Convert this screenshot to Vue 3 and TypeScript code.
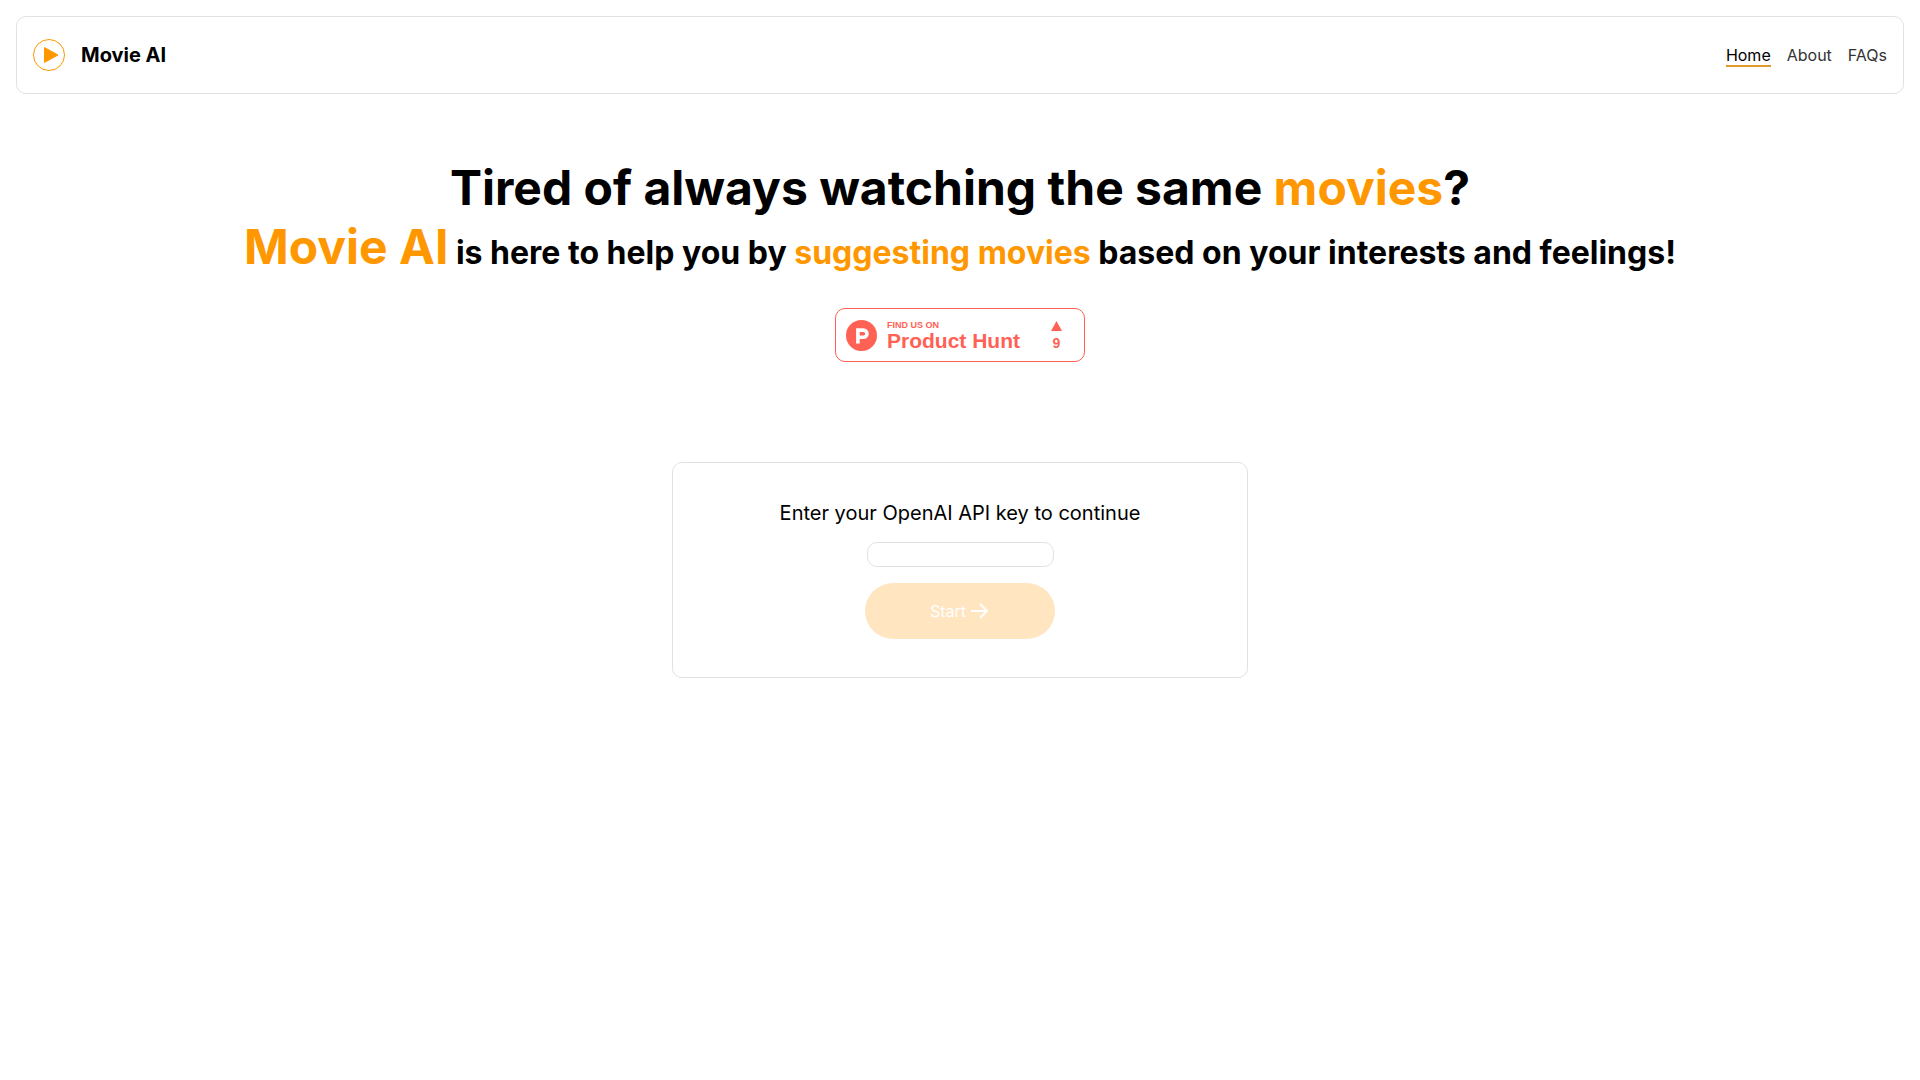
<script setup lang="ts">
import { computed, ref } from 'vue'

interface NavItem {
  label: string
  href: string
  active: boolean
}

const navItems: NavItem[] = [
  { label: 'Home', href: '#home', active: true },
  { label: 'About', href: '#about', active: false },
  { label: 'FAQs', href: '#faqs', active: false },
]

const apiKey = ref('')
const canStart = computed(() => apiKey.value.trim().length > 0)
</script>

<template>
  <div class="page">
    <header class="topbar">
      <a class="brand" href="#home">
        <svg class="brand-logo" viewBox="0 0 32 32" aria-hidden="true">
          <circle cx="16" cy="16" r="15.5" fill="none" stroke="#ff9800" />
          <path
            d="M11.5 8.6v14.8L25 16z"
            fill="#ff9800"
            stroke="#ff9800"
            stroke-width="1"
            stroke-linejoin="round"
          />
        </svg>
        <span>Movie AI</span>
      </a>
      <nav class="nav">
        <a
          v-for="item in navItems"
          :key="item.label"
          :href="item.href"
          class="nav-link"
          :class="{ active: item.active }"
          >{{ item.label }}</a
        >
      </nav>
    </header>

    <main class="content">
      <div class="hero">
        <h1 class="title">Tired of always watching the same <span class="accent">movies</span>?</h1>
        <h2 class="subtitle">
          <span class="accent large">Movie AI</span> is here to help you by
          <span class="accent">suggesting movies</span> based on your interests and feelings!
        </h2>
      </div>

      <a class="hunt" href="#product-hunt">
        <svg class="hunt-logo" viewBox="0 0 31 31" aria-hidden="true">
          <circle cx="15.5" cy="15.5" r="15.5" fill="#ff6154" />
          <path
            d="M11.900 23.600V10.100H17.400a3.500 3.500 0 0 1 0 7.200H11.900"
            fill="none"
            stroke="#fff"
            stroke-width="3.600"
          />
        </svg>
        <span class="hunt-text">
          <span class="hunt-small">FIND US ON</span>
          <span class="hunt-name">Product Hunt</span>
        </span>
        <span class="hunt-votes">
          <svg class="hunt-arrow" viewBox="0 0 11 10" aria-hidden="true">
            <path fill="#ff6154" d="M5.5 0L11 10H0z" />
          </svg>
          <span>9</span>
        </span>
      </a>

      <form class="card" @submit.prevent>
        <label class="card-label" for="api-key">Enter your OpenAI API key to continue</label>
        <input id="api-key" v-model="apiKey" class="key-input" type="password" autocomplete="off" />
        <button class="start" type="submit" :disabled="!canStart">
          <span>Start</span>
          <svg class="start-arrow" viewBox="0 0 20 20" aria-hidden="true">
            <path d="M1 10h15M10 3l7 7-7 7" fill="none" stroke="currentColor" stroke-width="2" />
          </svg>
        </button>
      </form>
    </main>
  </div>
</template>

<style>
body {
  margin: 0;
  background: #fff;
}
</style>

<style scoped>
.page {
  display: flex;
  flex-direction: column;
  padding: 16px;
  color: #000;
  font-family: Inter, 'Liberation Sans', sans-serif;
  font-size: 16px;
}

.topbar {
  display: flex;
  align-items: center;
  justify-content: space-between;
  padding: 22px 16px;
  border: 1px solid #e2e2e2;
  border-radius: 10px;
}

.brand {
  display: flex;
  align-items: center;
  gap: 16px;
  color: #000;
  font-size: 20px;
  font-weight: 700;
  text-decoration: none;
}

.brand-logo {
  width: 32px;
  height: 32px;
}

.nav {
  display: flex;
  gap: 16px;
  padding-top: 2px;
}

.nav-link {
  border-bottom: 2px solid transparent;
  color: #333;
  line-height: 20px;
  text-decoration: none;
}

.nav-link.active {
  border-color: #e09a2b;
  color: #000;
}

.content {
  display: flex;
  flex-direction: column;
  align-items: center;
  padding-top: 64px;
}

.hero {
  text-align: center;
}

.title,
.subtitle {
  margin: 0;
  font-weight: 700;
}

.title {
  font-size: 48px;
  line-height: 60px;
}

.subtitle {
  font-size: 32px;
  line-height: 58px;
}

.accent {
  color: #ff9800;
}

.large {
  font-size: 48px;
}

.hunt {
  display: flex;
  align-items: center;
  box-sizing: border-box;
  width: 250px;
  height: 54px;
  margin-top: 26px;
  padding: 0 22px 0 10px;
  border: 1px solid #ff6154;
  border-radius: 10px;
  color: #ff6154;
  font-family: 'Liberation Sans', Arial, sans-serif;
  font-weight: 700;
  text-decoration: none;
}

.hunt-logo {
  width: 31px;
  height: 31px;
}

.hunt-text {
  display: flex;
  flex: 1;
  flex-direction: column;
  padding: 2px 0 0 10px;
}

.hunt-small {
  font-size: 9px;
  line-height: 10px;
}

.hunt-name {
  font-size: 21px;
  line-height: 22px;
}

.hunt-votes {
  display: flex;
  flex-direction: column;
  align-items: center;
  gap: 4px;
  padding-top: 2px;
  font-size: 14px;
  line-height: 16px;
}

.hunt-arrow {
  width: 11px;
  height: 10px;
}

.card {
  display: flex;
  flex-direction: column;
  align-items: center;
  gap: 16px;
  box-sizing: border-box;
  width: 100%;
  max-width: 576px;
  margin-top: 100px;
  padding: 38px;
  border: 1px solid #e2e2e2;
  border-radius: 10px;
}

.card-label {
  font-size: 20px;
  line-height: 25px;
}

.key-input {
  box-sizing: border-box;
  width: 187px;
  height: 25px;
  padding: 0 8px;
  border: 1px solid #e2e2e2;
  border-radius: 10px;
  background: #fff;
  font: inherit;
  outline: none;
}

.start {
  display: flex;
  align-items: center;
  justify-content: center;
  gap: 4px;
  width: 190px;
  height: 56px;
  padding: 0;
  border: 0;
  border-radius: 28px;
  background: #ff9800;
  color: #fff;
  font: inherit;
  cursor: pointer;
}

.start:disabled {
  background: #ffe5c0;
  cursor: default;
}

.start-arrow {
  width: 20px;
  height: 20px;
}
</style>
